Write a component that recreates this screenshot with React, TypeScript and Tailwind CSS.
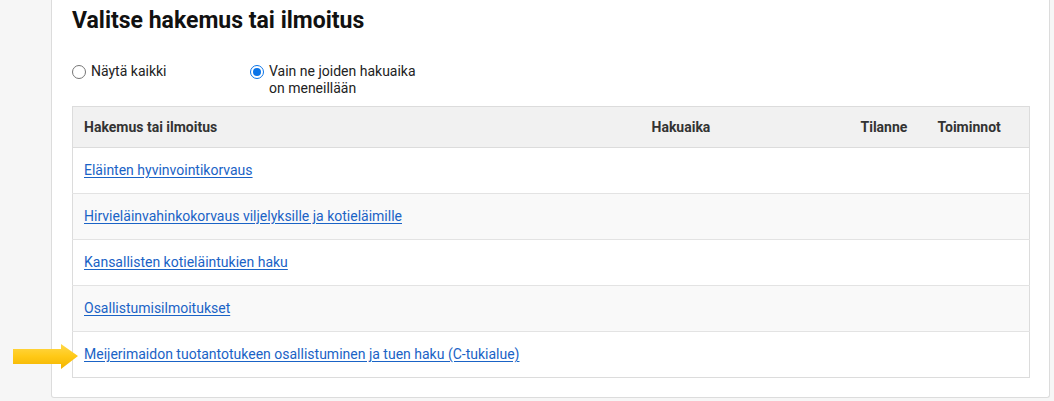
import React from "react";

const rows = [
  "Eläinten hyvinvointikorvaus",
  "Hirvieläinvahinkokorvaus viljelyksille ja kotieläimille",
  "Kansallisten kotieläintukien haku",
  "Osallistumisilmoitukset",
  "Meijerimaidon tuotantotukeen osallistuminen ja tuen haku (C-tukialue)",
];

function Radio({ checked }: { checked?: boolean }) {
  return (
    <span
      className={
        "mt-[2px] flex h-[14px] w-[14px] shrink-0 items-center justify-center rounded-full border " +
        (checked ? "border-[#0a74e8] bg-white" : "border-[#767676] bg-white")
      }
    >
      {checked && <span className="h-[8px] w-[8px] rounded-full bg-[#0a74e8]" />}
    </span>
  );
}

export default function App() {
  return (
    <div
      className="relative h-[401px] w-[1054px] overflow-hidden bg-[#f6f6f6] text-[#222]"
      style={{ fontFamily: "Roboto, 'Liberation Sans', sans-serif" }}
    >
      <div className="ml-[51px] mr-[4px] h-[398px] rounded-b-[3px] border-x border-b border-[#dcdcdc] bg-white px-[20px] pt-[8px]">
        <h1 className="text-[23px] font-bold leading-[26px] text-[#111]">Valitse hakemus tai ilmoitus</h1>
        <div className="mt-[29px] flex text-[14px] leading-[17px] text-[#222]">
          <label className="flex w-[178px] gap-[5px]">
            <Radio />
            <span>Näytä kaikki</span>
          </label>
          <label className="flex w-[180px] gap-[5px]">
            <Radio checked />
            <span>
              Vain ne joiden hakuaika
              <br />
              on meneillään
            </span>
          </label>
        </div>
        <table className="mt-[9px] w-[957px] table-fixed border-collapse border border-[#dcdcdc] text-[14px]">
          <colgroup>
            <col className="w-[568px]" />
            <col className="w-[209px]" />
            <col className="w-[77px]" />
            <col className="w-[103px]" />
          </colgroup>
          <thead>
            <tr className="h-[41px] bg-[#f1f1f1] text-left">
              <th className="border-b border-[#dcdcdc] pl-[11px] font-bold text-[#333]">Hakemus tai ilmoitus</th>
              <th className="border-b border-[#dcdcdc] pl-[11px] font-bold text-[#333]">Hakuaika</th>
              <th className="border-b border-[#dcdcdc] pl-[11px] font-bold text-[#333]">Tilanne</th>
              <th className="border-b border-[#dcdcdc] pl-[11px] font-bold text-[#333]">Toiminnot</th>
            </tr>
          </thead>
          <tbody>
            {rows.map((r, i) => (
              <tr
                key={r}
                className={
                  "h-[46px] border-t border-[#e3e3e3] " + (i % 2 === 1 ? "bg-[#f9f9f9]" : "bg-white")
                }
              >
                <td className="pl-[11px]">
                  <a href="#" className="text-[#1a63c6] underline underline-offset-[2px]">
                    {r}
                  </a>
                </td>
                <td />
                <td />
                <td />
              </tr>
            ))}
          </tbody>
        </table>
      </div>
      <svg className="absolute left-[12px] top-[343px]" width="68" height="28" viewBox="0 0 68 28">
        <defs>
          <linearGradient id="ag" x1="0" y1="0" x2="0" y2="1">
            <stop offset="0" stopColor="#ffd84a" />
            <stop offset="0.5" stopColor="#ffc916" />
            <stop offset="1" stopColor="#f2b400" />
          </linearGradient>
        </defs>
        <polygon points="1,6 49,6 49,1 66,13 49,26 49,21 1,21" fill="url(#ag)" />
      </svg>
    </div>
  );
}
